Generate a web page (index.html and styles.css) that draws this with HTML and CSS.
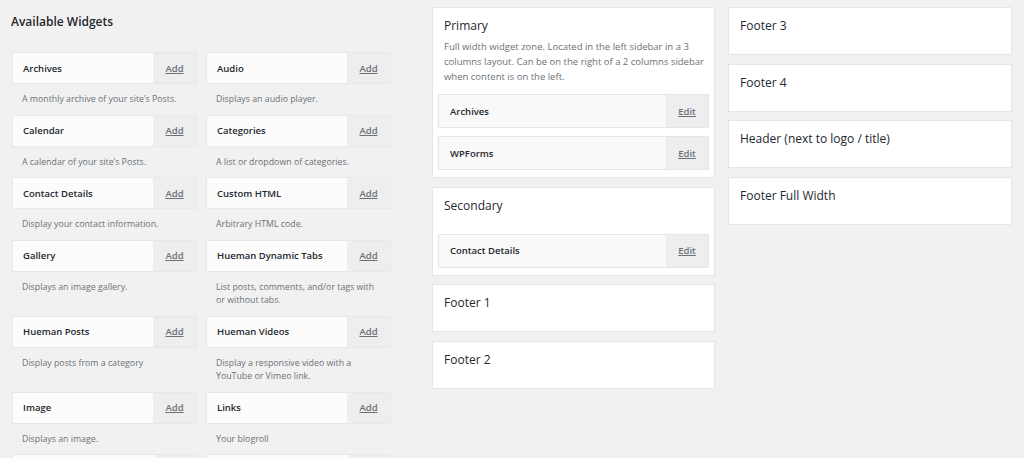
FILE: index.html
```html
<!DOCTYPE html>
<html lang="en">
<head>
    <meta charset="UTF-8">
    <meta name="viewport" content="width=device-width, initial-scale=1.0">
    <title>Widgets</title>
    <link rel="stylesheet" href="styles.css">
</head>
<body>
    <div class="page">
        <!-- Available widgets -->
        <div class="available">
            <h2 class="available-title">Available Widgets</h2>
            <div class="widget-grid">
                <div class="widget-item">
                    <div class="widget-card"><span class="widget-name">Archives</span><a class="widget-add" href="#">Add</a></div>
                    <p class="widget-desc">A monthly archive of your site’s Posts.</p>
                </div>
                <div class="widget-item">
                    <div class="widget-card"><span class="widget-name">Audio</span><a class="widget-add" href="#">Add</a></div>
                    <p class="widget-desc">Displays an audio player.</p>
                </div>
                <div class="widget-item">
                    <div class="widget-card"><span class="widget-name">Calendar</span><a class="widget-add" href="#">Add</a></div>
                    <p class="widget-desc">A calendar of your site’s Posts.</p>
                </div>
                <div class="widget-item">
                    <div class="widget-card"><span class="widget-name">Categories</span><a class="widget-add" href="#">Add</a></div>
                    <p class="widget-desc">A list or dropdown of categories.</p>
                </div>
                <div class="widget-item">
                    <div class="widget-card"><span class="widget-name">Contact Details</span><a class="widget-add" href="#">Add</a></div>
                    <p class="widget-desc">Display your contact information.</p>
                </div>
                <div class="widget-item">
                    <div class="widget-card"><span class="widget-name">Custom HTML</span><a class="widget-add" href="#">Add</a></div>
                    <p class="widget-desc">Arbitrary HTML code.</p>
                </div>
                <div class="widget-item">
                    <div class="widget-card"><span class="widget-name">Gallery</span><a class="widget-add" href="#">Add</a></div>
                    <p class="widget-desc">Displays an image gallery.</p>
                </div>
                <div class="widget-item">
                    <div class="widget-card"><span class="widget-name">Hueman Dynamic Tabs</span><a class="widget-add" href="#">Add</a></div>
                    <p class="widget-desc">List posts, comments, and/or tags with or without tabs.</p>
                </div>
                <div class="widget-item">
                    <div class="widget-card"><span class="widget-name">Hueman Posts</span><a class="widget-add" href="#">Add</a></div>
                    <p class="widget-desc">Display posts from a category</p>
                </div>
                <div class="widget-item">
                    <div class="widget-card"><span class="widget-name">Hueman Videos</span><a class="widget-add" href="#">Add</a></div>
                    <p class="widget-desc">Display a responsive video with a YouTube or Vimeo link.</p>
                </div>
                <div class="widget-item">
                    <div class="widget-card"><span class="widget-name">Image</span><a class="widget-add" href="#">Add</a></div>
                    <p class="widget-desc">Displays an image.</p>
                </div>
                <div class="widget-item">
                    <div class="widget-card"><span class="widget-name">Links</span><a class="widget-add" href="#">Add</a></div>
                    <p class="widget-desc">Your blogroll</p>
                </div>
                <div class="widget-item">
                    <div class="widget-card widget-card-cut"></div>
                </div>
                <div class="widget-item">
                    <div class="widget-card widget-card-cut"></div>
                </div>
            </div>
        </div>

        <!-- Sidebars, first column -->
        <div class="sidebar-col">
            <div class="sidebar-box">
                <h3 class="sidebar-title">Primary</h3>
                <p class="sidebar-desc">Full width widget zone. Located in the left sidebar in a 3 columns layout. Can be on the right of a 2 columns sidebar when content is on the left.</p>
                <div class="sidebar-widgets">
                    <div class="sidebar-widget"><span class="sidebar-widget-name">Archives</span><a class="sidebar-edit" href="#">Edit</a></div>
                    <div class="sidebar-widget"><span class="sidebar-widget-name">WPForms</span><a class="sidebar-edit" href="#">Edit</a></div>
                </div>
            </div>
            <div class="sidebar-box">
                <h3 class="sidebar-title">Secondary</h3>
                <div class="sidebar-widgets sidebar-widgets-top">
                    <div class="sidebar-widget"><span class="sidebar-widget-name">Contact Details</span><a class="sidebar-edit" href="#">Edit</a></div>
                </div>
            </div>
            <div class="sidebar-box sidebar-empty">
                <h3 class="sidebar-title">Footer 1</h3>
            </div>
            <div class="sidebar-box sidebar-empty">
                <h3 class="sidebar-title">Footer 2</h3>
            </div>
        </div>

        <!-- Sidebars, second column -->
        <div class="sidebar-col sidebar-col-right">
            <div class="sidebar-box sidebar-empty">
                <h3 class="sidebar-title">Footer 3</h3>
            </div>
            <div class="sidebar-box sidebar-empty">
                <h3 class="sidebar-title">Footer 4</h3>
            </div>
            <div class="sidebar-box sidebar-empty">
                <h3 class="sidebar-title">Header (next to logo / title)</h3>
            </div>
            <div class="sidebar-box sidebar-empty">
                <h3 class="sidebar-title">Footer Full Width</h3>
            </div>
        </div>
    </div>
</body>
</html>
```

FILE: styles.css
```css
* {
    margin: 0;
    padding: 0;
    box-sizing: border-box;
    font-family: 'Open Sans', 'Noto Sans', sans-serif;
}

body {
    background: #f1f1f1;
    color: #23282d;
    height: 458px;
    overflow: hidden;
}

.page {
    display: flex;
    align-items: flex-start;
    padding: 7px 0 0 12px;
}

/* Available widgets */
.available {
    width: 379px;
    margin-right: 41px;
}

.available-title {
    font-size: 12px;
    font-weight: 600;
    line-height: 20px;
    margin: 5px 0 20px -1px;
    color: #23282d;
}

.widget-grid {
    display: grid;
    grid-template-columns: 185px 185px;
    column-gap: 9px;
}

.widget-card {
    display: flex;
    height: 32px;
    background: #fcfcfc;
    border: 1px solid #e8e8e8;
}

.widget-card-cut {
    background: linear-gradient(to right, #fcfcfc 142px, #eeeeee 142px);
}

.widget-name {
    flex: 1;
    display: flex;
    align-items: center;
    padding-left: 10px;
    font-size: 9.5px;
    font-weight: 600;
    color: #23282d;
}

.widget-add,
.sidebar-edit {
    width: 43px;
    display: flex;
    align-items: center;
    justify-content: center;
    background: #eeeeee;
    font-size: 9.5px;
    font-weight: 600;
    color: #6c7177;
    text-decoration: underline;
}

.widget-desc {
    padding: 9px 10px 8px;
    font-size: 8.8px;
    line-height: 13.5px;
    color: #6c7177;
}

/* Sidebar boxes */
.sidebar-col {
    width: 283px;
    margin-right: 13px;
}

.sidebar-col-right {
    width: 284px;
    margin-right: 0;
}

.sidebar-box {
    background: #fff;
    border: 1px solid #e6e6e6;
    padding: 0 5px 7px;
    margin-bottom: 8.7px;
}

.sidebar-empty {
    padding-bottom: 18px;
}

.sidebar-title {
    padding: 8px 5px 0 6px;
    font-size: 12px;
    font-weight: 400;
    line-height: 20px;
    color: #23282d;
}

.sidebar-desc {
    padding: 3px 5px 0 6px;
    font-size: 9.5px;
    line-height: 15px;
    color: #6c7177;
}

.sidebar-widgets {
    padding-top: 10px;
}

.sidebar-widgets-top {
    padding-top: 18px;
}

.sidebar-widget {
    display: flex;
    height: 34px;
    background: #f9f9f9;
    border: 1px solid #e6e6e6;
    margin-bottom: 8px;
}

.sidebar-widget:last-child {
    margin-bottom: 0;
}

.sidebar-widget-name {
    flex: 1;
    display: flex;
    align-items: center;
    padding-left: 11px;
    font-size: 9.5px;
    font-weight: 600;
    color: #23282d;
}

.sidebar-edit {
    width: 42px;
}
```
